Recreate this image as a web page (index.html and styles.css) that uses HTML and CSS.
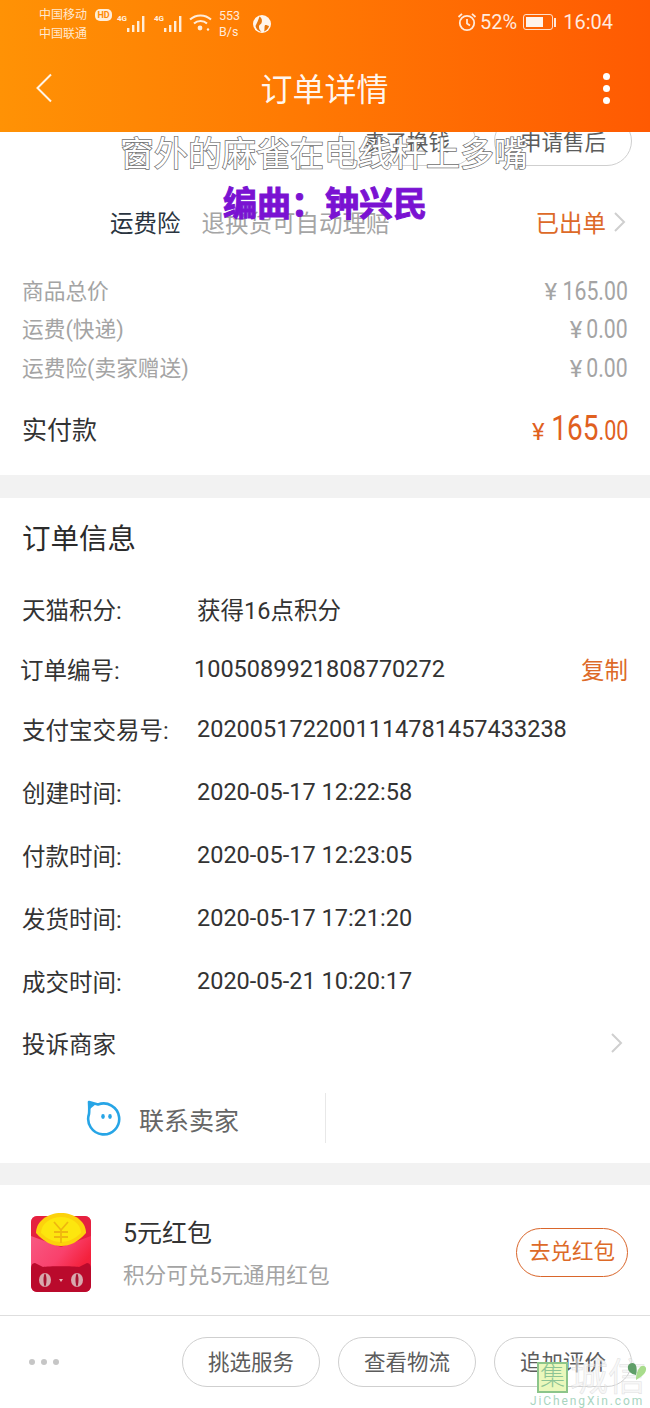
FILE: index.html
```html
<!DOCTYPE html>
<html lang="zh-CN">
<head>
<meta charset="utf-8">
<title>订单详情</title>
<link rel="stylesheet" href="styles.css">
</head>
<body>
<div class="page">
  <header class="header">
    <div class="status">
      <div class="carriers"><div class="carrier">中国移动<span class="hd">HD</span></div><div class="carrier">中国联通</div></div>
      <div class="sig"><span class="tag">4G</span><svg width="22" height="18" viewBox="0 0 22 18"><g fill="#fff" fill-opacity=".85"><rect x="1" y="13" width="2.4" height="4"/><rect x="6" y="10" width="2.4" height="7"/><rect x="11" y="6" width="2.4" height="11"/><rect x="16" y="1" width="2.4" height="16"/></g></svg></div>
      <div class="sig"><span class="tag">4G</span><svg width="22" height="18" viewBox="0 0 22 18"><g fill="#fff" fill-opacity=".85"><rect x="1" y="13" width="2.4" height="4"/><rect x="6" y="10" width="2.4" height="7"/><rect x="11" y="6" width="2.4" height="11"/><rect x="16" y="1" width="2.4" height="16"/></g></svg></div>
      <svg class="wifi" width="24" height="19" viewBox="0 0 24 19"><g fill="none" stroke="#fff" stroke-opacity=".85" stroke-width="2"><path d="M1 6.500C7 1 16 1 22 6.500"/><path d="M5 10.500C8.500 7.200 14.500 7.200 18 10.500"/></g><circle cx="11" cy="15" r="2.400" fill="#fff" fill-opacity=".85"/><circle cx="19" cy="16.500" r="1.200" fill="#fff" fill-opacity=".85"/></svg>
      <div class="speed"><div>553</div><div>B/s</div></div>
      <svg class="globe" width="18" height="18" viewBox="0 0 18 18"><circle cx="9" cy="9" r="9" fill="#fff" fill-opacity=".92"/><path d="M6.500 1.500C9 3 9.500 6 8.500 8 7.500 10 6 9.500 6 12c0 2 1 3.500 2.500 5C5 16 3 14 2.500 11 3.500 8.500 5.500 5 6.500 1.500ZM12 10c2 0 3.500.5 4 1.500C15 14 13 16 11 16.500 12 14.500 11 12 12 10Z" fill="#e8780c"/></svg>
      <div class="status-right">
        <svg width="20" height="20" viewBox="0 0 20 20"><g fill="none" stroke="#fff" stroke-opacity=".85" stroke-width="1.800"><circle cx="10" cy="11" r="7.200"/><path d="M10 7v4.500l3 2"/><path d="M1.500 5 5 1.800M18.500 5 15 1.800"/></g></svg>
        <span class="pct">52%</span>
        <span class="battery"><span class="battery-fill"></span></span><span class="battery-tip"></span>
        <span class="clock">16:04</span>
      </div>
    </div>
    <nav class="nav">
      <svg class="back" width="18" height="30" viewBox="0 0 18 30"><path d="M16 1.500 2.500 15 16 28.500" fill="none" stroke="#fff" stroke-opacity=".9" stroke-width="2"/></svg>
      <h1 class="title">订单详情</h1>
      <span class="more"><i></i><i></i><i></i></span>
    </nav>
  </header>

  <section class="card top">
    <div class="clip-row">
      <span class="pill pill-clip">卖了换钱</span>
      <span class="pill pill-clip">申请售后</span>
    </div>
    <div class="insure">
      <span class="insure-name">运费险</span>
      <span class="insure-note">退换货可自动理赔</span>
      <span class="insure-state">已出单</span>
      <svg class="chev" width="13" height="22" viewBox="0 0 13 22"><path d="M2 2l9 9-9 9" fill="none" stroke="#cfcfcf" stroke-width="2"/></svg>
    </div>
    <div class="price-row first"><span class="price-label">商品总价</span><span class="amt amt-long"><b>¥</b><span class="num">165.00</span></span></div>
    <div class="price-row"><span class="price-label">运费(快递)</span><span class="amt amt-short"><b>¥</b><span class="num">0.00</span></span></div>
    <div class="price-row"><span class="price-label">运费险(卖家赠送)</span><span class="amt amt-short"><b>¥</b><span class="num">0.00</span></span></div>
    <div class="paid"><span class="paid-label">实付款</span><span class="paid-amt"><b>¥</b><span class="paid-num"><em>165</em>.00</span></span></div>
  </section>

  <section class="card info">
    <h2 class="info-title">订单信息</h2>
    <div class="info-row r60"><span class="k">天猫积分:</span><span class="v">获得16点积分</span></div>
    <div class="info-row r60 shifted"><span class="k">订单编号:</span><span class="v">1005089921808770272</span><span class="copy">复制</span></div>
    <div class="info-row r60"><span class="k">支付宝交易号:</span><span class="v">2020051722001114781457433238</span></div>
    <div class="info-row time"><span class="k">创建时间:</span><span class="v">2020-05-17 12:22:58</span></div>
    <div class="info-row time"><span class="k">付款时间:</span><span class="v">2020-05-17 12:23:05</span></div>
    <div class="info-row time"><span class="k">发货时间:</span><span class="v">2020-05-17 17:21:20</span></div>
    <div class="info-row time"><span class="k">成交时间:</span><span class="v">2020-05-21 10:20:17</span></div>
    <div class="info-row complain"><span class="k">投诉商家</span><svg class="chev" width="13" height="22" viewBox="0 0 13 22"><path d="M2 2l9 9-9 9" fill="none" stroke="#cfcfcf" stroke-width="2"/></svg></div>
    <div class="contact">
      <div class="contact-cell">
        <svg width="36" height="36" viewBox="0 0 36 36"><path d="M3 2l9 2.500A15.500 15.500 0 1 1 3 14C3.500 10 3.200 6 3 2Z" fill="#fff" stroke="#27a5e6" stroke-width="2.600" stroke-linejoin="round"/><path d="M3 2l7 2-6 5Z" fill="#27a5e6"/><ellipse cx="17" cy="16.500" rx="1.800" ry="2.400" fill="#27a5e6"/><ellipse cx="24" cy="16.500" rx="1.800" ry="2.400" fill="#27a5e6"/></svg>
        <span class="contact-text">联系卖家</span>
      </div>
    </div>
  </section>

  <section class="card packet">
    <svg class="packet-ico" width="62" height="80" viewBox="0 0 62 80">
      <defs>
        <linearGradient id="rp" x1="0" y1="0" x2="1" y2="1"><stop offset="0" stop-color="#f7618a"/><stop offset=".5" stop-color="#f9416c"/><stop offset=".75" stop-color="#f4213c"/><stop offset="1" stop-color="#e8174d"/></linearGradient>
      </defs>
      <rect x="0" y="3" width="60" height="76" rx="6" fill="url(#rp)"/>
      <path d="M0 9a6 6 0 0 1 6-6h48a6 6 0 0 1 6 6v14L30 34 0 23Z" fill="#e5213f"/>
      <path d="M5 20C5 8 17 0 30 0s25 8 25 20C47 29 39 33 30 33S13 29 5 20Z" fill="#fcd20c"/>
      <path d="M10 20C10 11 19 4 30 4s20 7 20 16C44 26 37 29 30 29S16 26 10 20Z" fill="#fde60e"/>
      <path d="M23 9l7 8 7-8M30 17v13M23 19h14M23 24h14" fill="none" stroke="#efb70f" stroke-width="1.800"/>
      <path d="M6 79a6 6 0 0 1-6-6V56c0-3 1-6 4-6l8 4c5-1 31-1 36 0l8-4c3 0 4 3 4 6v17a6 6 0 0 1-6 6Z" fill="#ba0a2c"/>
      <ellipse cx="14" cy="67" rx="6" ry="7" fill="#d8a9ae"/><ellipse cx="46" cy="67" rx="6" ry="7" fill="#d8a9ae"/>
      <ellipse cx="14" cy="67" rx="1.500" ry="6.500" fill="#a81230"/><ellipse cx="46" cy="67" rx="1.500" ry="6.500" fill="#a81230"/>
      <path d="M28 66h4l-2 3Z" fill="#e9b4b8"/>
    </svg>
    <div class="packet-text">
      <div class="packet-name">5元红包</div>
      <div class="packet-desc">积分可兑5元通用红包</div>
    </div>
    <span class="packet-btn">去兑红包</span>
  </section>

  <footer class="footer">
    <span class="dots"><i></i><i></i><i></i></span>
    <span class="pill">挑选服务</span>
    <span class="pill">查看物流</span>
    <span class="pill">追加评价</span>
  </footer>

  <div class="cap cap-a">窗外的麻雀在电线杆上多嘴</div>
  <div class="cap cap-b">编曲&#xFF1A;钟兴民</div>

  <div class="mark">
    <div class="mark-top">
      <span class="mark-box">集</span>
      <span class="mark-name">城信</span>
      <svg class="mark-leaf" width="20" height="19" viewBox="0 0 20 19"><path d="M9 18C14 15 20 11 19 6 18 3 14 3 12.500 6 11 7 9 12 9 18Z" fill="#a8dc8c"/><path d="M9 13C4 12 0 9 1 4 2 1 6 0 8 2 10 4 10 9 9 13Z" fill="#5f9e68"/></svg>
    </div>
    <div class="mark-url">JiChengXin.com</div>
  </div>
</div>
</body>
</html>
```
FILE: styles.css
```css
* { box-sizing: border-box; }
html, body { margin: 0; padding: 0; }
body { background: #f2f2f2; font-family: Roboto, "Noto Sans CJK SC", sans-serif; }
.page { position: relative; width: 650px; height: 1408px; overflow: hidden; background: #f2f2f2; }

.header { position: relative; z-index: 2; height: 132px; background: linear-gradient(90deg, #ff9205 0%, #ff7a03 45%, #ff5a02 100%); color: #fff; }
.status { display: flex; align-items: center; height: 44px; padding-left: 39px; }
.carriers { width: 73px; padding-top: 5px; font-size: 12px; line-height: 19px; color: rgba(255,255,255,.82); }
.carrier { display: flex; align-items: center; white-space: nowrap; height: 19px; }
.hd { margin-left: 8px; height: 12px; width: 17px; border-radius: 5px; background: rgba(255,255,255,.85); color: #ff8a04; font-size: 9px; line-height: 12px; text-align: center; font-weight: 700; }
.sig { display: flex; align-items: flex-start; margin-left: 5px; width: 32px; padding-top: 2px; }
.sig svg { margin-left: -1px; margin-top: 1px; }
.tag { font-size: 8px; line-height: 10px; font-weight: 700; color: rgba(255,255,255,.9); }
.wifi { margin-left: 3px; }
.speed { width: 26px; margin-left: 6px; padding-top: 3px; font-size: 12.500px; line-height: 16px; color: rgba(255,255,255,.85); }
.globe { margin-left: 8px; margin-top: 3px; }
.status-right { display: flex; align-items: center; margin-left: auto; padding-right: 37px; color: rgba(255,255,255,.88); }
.pct { margin-left: 3px; font-size: 20px; }
.battery { display: block; width: 30px; height: 16px; margin-left: 6px; padding: 2px; border: 1px solid rgba(255,255,255,.8); border-radius: 3px; }
.battery-fill { display: block; width: 17px; height: 100%; background: rgba(255,255,255,.92); }
.battery-tip { display: block; width: 2px; height: 9px; margin-left: 1px; background: rgba(255,255,255,.85); }
.clock { margin-left: 7px; font-size: 20px; }

.nav { display: flex; align-items: center; justify-content: space-between; height: 88px; padding: 0 40px 0 35px; position: relative; }
.title { position: absolute; left: 0; right: 1px; margin: 0; padding-bottom: 2px; text-align: center; font-size: 32px; font-weight: 400; color: rgba(255,255,255,.95); }
.more { display: flex; flex-direction: column; gap: 5px; }
.more i { display: block; width: 7px; height: 7px; border-radius: 50%; background: #fff; }

.card { background: #fff; }
.top { height: 343px; }
.clip-row { display: flex; justify-content: flex-end; gap: 18px; height: 65px; padding-right: 18px; overflow: hidden; }
.pill { display: flex; align-items: center; justify-content: center; flex: none; width: 138px; height: 50px; padding-bottom: 3px; border: 1px solid #cfcfcf; border-radius: 25px; background: #fff; color: #5c5c5c; font-size: 21.500px; }
.pill-clip { margin-top: -16px; padding-bottom: 2px; }
.insure { display: flex; align-items: center; height: 54px; padding: 0 24px 4px 110px; font-size: 23.500px; }
.insure-name { color: #2a3440; }
.insure-note { margin-left: 21px; color: #a5a5a5; }
.insure-state { margin-left: auto; color: #dd6a28; }
.insure .chev { margin-left: 7px; }
.price-row { display: flex; justify-content: space-between; align-items: center; height: 38.500px; padding: 0 22px; color: #a4a4a4; font-size: 21.700px; }
.price-row.first { margin-top: 21px; }
.price-label { margin-bottom: 4px; }
.amt { font-size: 25px; white-space: nowrap; }
.amt b { font-weight: 400; font-size: 24px; }
.num { display: inline-block; transform: scaleX(.85); transform-origin: right center; }
.amt-long b { margin-right: -6px; }
.amt-short b { margin-right: -3px; }
.paid { display: flex; justify-content: space-between; align-items: center; height: 50px; margin-top: 17px; padding: 0 22px; }
.paid-label { margin-bottom: 4px; font-size: 25px; color: #333; }
.paid-amt { color: #e0601f; font-size: 27px; white-space: nowrap; margin-bottom: 2px; }
.paid-amt b { font-weight: 400; font-size: 24px; margin-right: -13px; }
.paid-num { display: inline-block; transform: scaleX(.8); transform-origin: right center; }
.paid-amt em { font-style: normal; font-size: 35px; }

.info { margin-top: 23px; height: 665px; }
.info-title { margin: 0; height: 81px; padding-left: 22px; font-size: 28.500px; line-height: 83px; font-weight: 400; color: #2b2b2b; }
.info-row { display: flex; align-items: center; height: 63px; padding: 0 22px; font-size: 23.500px; color: #333; }
.r60 { height: 60px; }
.time { padding-top: 2px; }
.k { width: 175px; flex: none; white-space: nowrap; }
.v { white-space: nowrap; }
.shifted { padding-left: 21px; }
.shifted .k { margin-left: -1px; }
.shifted .v { margin-left: -1px; }
.copy { margin-left: auto; color: #dd6a28; }
.complain { justify-content: space-between; padding-top: 1px; padding-right: 27px; }
.complain .chev { flex: none; }
.contact { display: flex; height: 50px; margin-top: 19px; }
.contact-cell { display: flex; align-items: center; gap: 17px; width: 326px; padding-left: 86px; border-right: 1px solid #e8e8e8; color: #666; font-size: 25px; }
.contact-text { margin-top: 2px; }

.packet { display: flex; align-items: center; margin-top: 22px; height: 131px; padding: 0 22px 0 31px; border-bottom: 1px solid #dedede; }
.packet-ico { flex: none; margin-top: 6px; }
.packet-text { margin-left: 30px; padding-top: 7px; }
.packet-name { font-size: 25px; line-height: 34px; color: #333; }
.packet-desc { margin-top: 10px; font-size: 21.600px; line-height: 30px; color: #a4a4a4; }
.packet-btn { margin-left: auto; margin-top: 4px; width: 112px; height: 49px; border: 1px solid #d9662b; border-radius: 25px; color: #dd6a28; font-size: 21.500px; line-height: 46px; text-align: center; }

.footer { display: flex; align-items: center; gap: 18px; height: 92px; padding: 0 18px 0 29px; background: #fff; }
.dots { display: flex; gap: 6px; margin-right: auto; }
.dots i { display: block; width: 6px; height: 6px; border-radius: 50%; background: #c6c6c6; }

.cap { position: absolute; z-index: 3; white-space: nowrap; font-size: 34px; line-height: 40px; }
.cap-a { left: 120px; top: 134px; color: #fff; -webkit-text-stroke: 1.500px #707070; paint-order: stroke fill; }
.cap-b { left: 223px; top: 184px; color: #7a12d2; font-weight: 700; -webkit-text-stroke: 1px #7a12d2; }

.mark { position: absolute; z-index: 3; left: 537px; top: 1361px; width: 113px; }
.mark-top { position: relative; display: flex; align-items: center; height: 32px; }
.mark-box { flex: none; width: 31px; height: 31px; border: 2px solid #8cc58a; background: #eaf8bc; color: #8cc494; font-size: 25px; font-weight: 300; line-height: 26px; text-align: center; }
.mark-name { margin-left: 2px; font-size: 38px; line-height: 32px; color: rgba(240,240,240,.5); -webkit-text-stroke: .5px rgba(205,205,205,.6); white-space: nowrap; }
.mark-leaf { position: absolute; right: 3px; top: 1px; }
.mark-url { white-space: nowrap; font-size: 12px; line-height: 13px; letter-spacing: 1.900px; color: #a9d5bf; margin-top: 2px; margin-left: -7px; }
```
